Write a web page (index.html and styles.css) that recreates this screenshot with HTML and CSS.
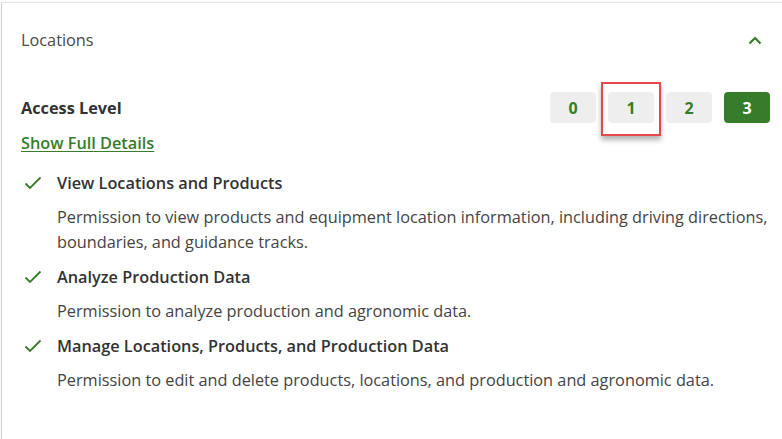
FILE: index.html
```html
<!DOCTYPE html>
<html>
<head>
<meta charset="utf-8">
<link rel="stylesheet" href="styles.css">
</head>
<body>
<div class="card">
  <div class="header">
    <span class="title">Locations</span>
    <svg class="chev" width="14" height="9" viewBox="0 0 14 9"><path d="M1.5 7.5 L7 2 L12.5 7.5" fill="none" stroke="#367c2b" stroke-width="2.2"/></svg>
  </div>
  <div class="content">
    <div class="access">
      <span class="access-label">Access Level</span>
      <div class="levels">
        <span class="lvl">0</span>
        <span class="lvl marked">1<span class="mark"></span></span>
        <span class="lvl">2</span>
        <span class="lvl active">3</span>
      </div>
    </div>
    <a class="details" href="#">Show Full Details</a>
    <div class="perms">
      <div class="perm">
        <div class="perm-title"><svg class="check" width="18" height="14" viewBox="0 0 18 14"><path d="M1.5 7.5 L6 12 L16.5 1.5" fill="none" stroke="#367c2b" stroke-width="1.8"/></svg>View Locations and Products</div>
        <p class="perm-desc">Permission to view products and equipment location information, including driving directions, boundaries, and guidance tracks.</p>
      </div>
      <div class="perm">
        <div class="perm-title"><svg class="check" width="18" height="14" viewBox="0 0 18 14"><path d="M1.5 7.5 L6 12 L16.5 1.5" fill="none" stroke="#367c2b" stroke-width="1.8"/></svg>Analyze Production Data</div>
        <p class="perm-desc">Permission to analyze production and agronomic data.</p>
      </div>
      <div class="perm">
        <div class="perm-title"><svg class="check" width="18" height="14" viewBox="0 0 18 14"><path d="M1.5 7.5 L6 12 L16.5 1.5" fill="none" stroke="#367c2b" stroke-width="1.8"/></svg>Manage Locations, Products, and Production Data</div>
        <p class="perm-desc">Permission to edit and delete products, locations, and production and agronomic data.</p>
      </div>
    </div>
  </div>
</div>
</body>
</html>
```
FILE: styles.css
```css
html, body {
  margin: 0;
  padding: 0;
  background: #fff;
}
body {
  font-family: "Open Sans", "Noto Sans", sans-serif;
  color: #333;
  width: 782px;
  height: 439px;
  overflow: hidden;
}
.card {
  margin-left: 1px;
  margin-top: 2px;
  border-left: 1px solid #cfcfcf;
  border-top: 1px solid #e6e6e6;
  box-shadow: 0 -1px 2px rgba(0,0,0,0.04);
  height: 436px;
}
.header {
  display: flex;
  align-items: center;
  justify-content: space-between;
  height: 74px;
  padding: 0 20px 0 19px;
}
.title {
  font-size: 16.3px;
  font-weight: 400;
  color: #4a4a4a;
}
.chev {
  display: block;
  margin-top: 1px;
}
.content {
  padding: 0 11px 0 19px;
}
.access {
  display: flex;
  align-items: center;
  justify-content: space-between;
  height: 31px;
  margin-top: 15px;
}
.access-label {
  font-size: 16.3px;
  font-weight: 700;
  color: #333;
}
.levels {
  display: flex;
  gap: 12px;
  margin-right: 1px;
}
.lvl {
  position: relative;
  width: 46px;
  height: 31px;
  border-radius: 4px;
  background: #eeeeee;
  color: #367c2b;
  font-weight: 700;
  font-size: 16px;
  display: flex;
  align-items: center;
  justify-content: center;
}
.lvl.active {
  background: #367c2b;
  color: #fff;
}
.mark {
  position: absolute;
  left: -7px;
  top: -10px;
  width: 56px;
  height: 50px;
  border: 2px solid #e5484d;
  box-shadow: 0 4px 5px rgba(0,0,0,0.3);
}
.details {
  display: inline-block;
  margin-top: 8px;
  font-size: 16.3px;
  font-weight: 600;
  color: #367c2b;
  text-decoration: underline;
  text-underline-offset: 2px;
  line-height: 25px;
}
.perms {
  display: flex;
  flex-direction: column;
  gap: 12px;
  margin-top: 17px;
}
.perm-title {
  display: flex;
  align-items: center;
  font-size: 16.3px;
  font-weight: 600;
  color: #333;
  line-height: 20px;
}
.check {
  margin-left: 3px;
  margin-right: 15px;
}
.perm-desc {
  margin: 12px 0 0 36px;
  font-size: 16.3px;
  line-height: 25px;
  color: #444;
}
```
